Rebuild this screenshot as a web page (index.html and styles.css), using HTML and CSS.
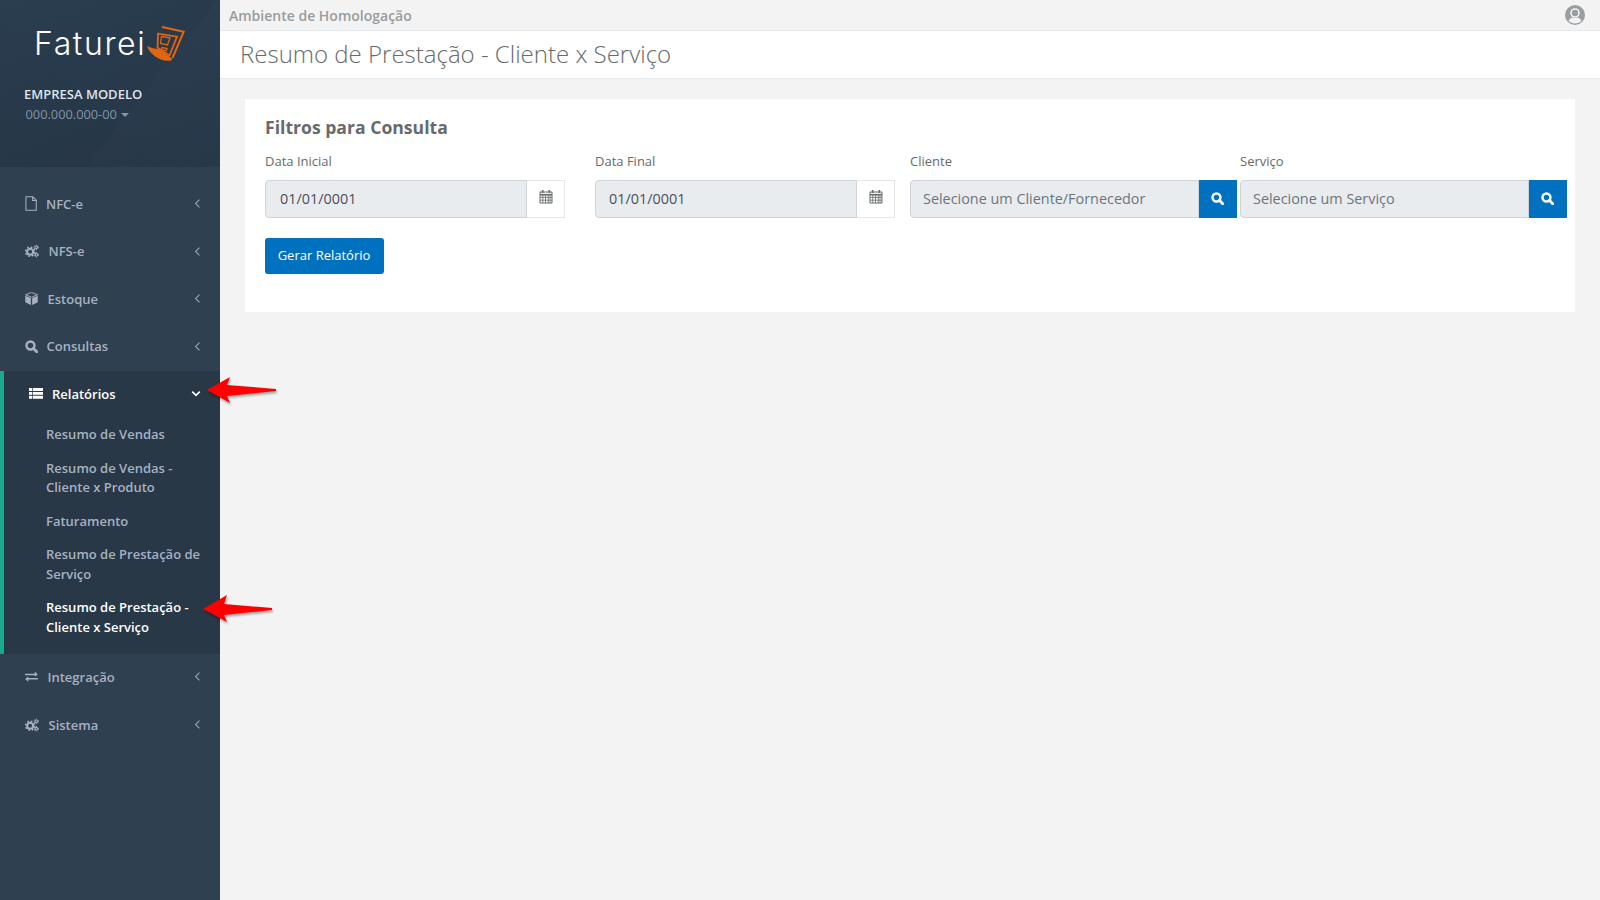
FILE: index.html
```html
<!DOCTYPE html>
<html lang="pt-BR">
<head>
<meta charset="utf-8">
<title>Resumo de Prestação - Cliente x Serviço</title>
<link rel="stylesheet" href="styles.css">
</head>
<body>
<svg class="defs" xmlns="http://www.w3.org/2000/svg">
  <symbol id="i-chev-left" viewBox="0 0 8 12"><path d="M6.3 1.5 1.8 6l4.500 4.500" fill="none" stroke="currentColor" stroke-width="1.4"/></symbol>
  <symbol id="i-chev-down" viewBox="0 0 12 8"><path d="M1.5 1.7 6 6.200l4.500-4.500" fill="none" stroke="currentColor" stroke-width="2"/></symbol>
  <symbol id="i-search" viewBox="0 0 14 14"><circle cx="5.9" cy="5.900" r="4.300" fill="none" stroke="currentColor" stroke-width="2.600"/><path d="M9 9 12.600 12.600" stroke="currentColor" stroke-width="3" stroke-linecap="round"/></symbol>
  <symbol id="i-cogs" viewBox="0 0 15 14"><circle cx="5.500" cy="7.800" r="3.200" fill="none" stroke="currentColor" stroke-width="2.200"/><circle cx="5.500" cy="7.800" r="4.900" fill="none" stroke="currentColor" stroke-width="1.600" stroke-dasharray="1.900 1.950"/><circle cx="12" cy="3" r="1.400" fill="none" stroke="currentColor" stroke-width="1.200"/><circle cx="12" cy="3" r="2.400" fill="none" stroke="currentColor" stroke-width="1" stroke-dasharray="1.200 1.300"/><circle cx="12" cy="11" r="1.400" fill="none" stroke="currentColor" stroke-width="1.200"/><circle cx="12" cy="11" r="2.400" fill="none" stroke="currentColor" stroke-width="1" stroke-dasharray="1.200 1.300"/></symbol>
  <symbol id="i-cal" viewBox="0 0 14 14"><path d="M1 2.500h12v11H1z" fill="none" stroke="currentColor"/><path d="M1 5.200h12" stroke="currentColor" stroke-width="1.600"/><path d="M3.700.6v3M10.300.6v3" stroke="currentColor" stroke-width="1.600"/><path d="M1 7.900h12M1 10.700h12M3.800 5.500v8M6.500 5.500v8M9.200 5.500v8M11 5.500v8" stroke="currentColor" stroke-width=".8"/></symbol>
</svg>

<aside class="sidebar">
  <header class="profile">
    <div class="logo">
      <span class="logo-text">Faturei</span>
      <svg class="logo-mark" viewBox="0 0 38 36" xmlns="http://www.w3.org/2000/svg">
        <path d="M15 .9 36.700 5.700 25.500 32" fill="none" stroke="#e2650f" stroke-width="2"/>
        <path d="M11 7.700 30 10.700 22.500 29.500 10.500 21.500z" fill="none" stroke="#e2650f" stroke-width="1.800"/>
        <path d="M14.500 10.500 23 11.800 20.500 19 13.500 17.500zM15 21.500l5 1-.6 2.300-4.600-1z" fill="none" stroke="#e2650f" stroke-width="1.300"/>
        <path d="M0 20c4 2 8 3 12 3 4.500 2.500 8.500 6 13 9.500 .5 1.800-1.500 2.500-4 2.300C11 34.500 3 28 0 20z" fill="#e2650f"/>
      </svg>
    </div>
    <div class="company">EMPRESA MODELO</div>
    <div class="doc">000.000.000-00 <span class="caret"></span></div>
  </header>

  <nav class="menu">
    <a class="item">
      <svg class="ico ico-file" viewBox="0 0 13 16" xmlns="http://www.w3.org/2000/svg"><path d="M1 .8h7.500L12.200 4.500v10.700H1zM8.200 1v3.800h4" fill="none" stroke="currentColor" stroke-width="1.100"/></svg>
      <span class="label l-nfce">NFC-e</span>
      <svg class="chev"><use href="#i-chev-left"/></svg>
    </a>
    <a class="item">
      <svg class="ico ico-cogs"><use href="#i-cogs"/></svg>
      <span class="label l-cogs">NFS-e</span>
      <svg class="chev"><use href="#i-chev-left"/></svg>
    </a>
    <a class="item">
      <svg class="ico ico-cube" viewBox="0 0 14 14" xmlns="http://www.w3.org/2000/svg"><path d="M7 .5 13.500 3 7 5.600.5 3z" fill="none" stroke="currentColor"/><path d="M.3 4 6.300 6.500V14L.3 11z" fill="currentColor"/><path d="M13.700 4 7.700 6.500V14l6-3z" fill="currentColor"/></svg>
      <span class="label l-cube">Estoque</span>
      <svg class="chev"><use href="#i-chev-left"/></svg>
    </a>
    <a class="item">
      <svg class="ico ico-search"><use href="#i-search"/></svg>
      <span class="label l-search">Consultas</span>
      <svg class="chev"><use href="#i-chev-left"/></svg>
    </a>

    <div class="group">
      <a class="item item-open">
        <svg class="ico ico-list" viewBox="0 0 14 11" xmlns="http://www.w3.org/2000/svg"><path d="M0 0h14v2.900H0zM0 3.900h14v2.900H0zM0 7.800h14v3H0z" fill="currentColor"/><path d="M3.500 0v11" stroke="#293846" stroke-width=".7"/></svg>
        <span class="label l-list">Relatórios</span>
        <svg class="chev-down"><use href="#i-chev-down"/></svg>
      </a>
      <ul class="submenu">
        <li>Resumo de Vendas</li>
        <li>Resumo de Vendas - Cliente x Produto</li>
        <li>Faturamento</li>
        <li>Resumo de Prestação de Serviço</li>
        <li class="current">Resumo de Prestação - Cliente x Serviço</li>
      </ul>
    </div>

    <a class="item item-after">
      <svg class="ico ico-swap" viewBox="0 0 14 12" xmlns="http://www.w3.org/2000/svg"><path d="M0 3h10.500V.5L14 3.800 10.500 6V4.500H0zM14 7.500H3.500V6L0 8.800l3.500 3V9.300H14z" fill="currentColor"/></svg>
      <span class="label l-swap">Integração</span>
      <svg class="chev"><use href="#i-chev-left"/></svg>
    </a>
    <a class="item">
      <svg class="ico ico-cogs"><use href="#i-cogs"/></svg>
      <span class="label l-cogs">Sistema</span>
      <svg class="chev"><use href="#i-chev-left"/></svg>
    </a>
  </nav>
</aside>

<main class="main">
  <div class="topbar">
    <span class="env">Ambiente de Homologação</span>
    <svg class="user" viewBox="0 0 20 20" xmlns="http://www.w3.org/2000/svg"><circle cx="10" cy="10" r="10" fill="#9a9ea3"/><circle cx="10" cy="8" r="4" fill="none" stroke="#f3f3f4" stroke-width="1.600"/><path d="M3.500 16c1.200-2.800 3.200-3.600 4-3.600 1.500.8 3.500.8 5 0 .8 0 2.800.8 4 3.600-3.500 3.300-9.500 3.300-13 0z" fill="#f3f3f4"/></svg>
  </div>
  <div class="titlebar"><h1>Resumo de Prestação - Cliente x Serviço</h1></div>

  <section class="card">
    <h2>Filtros para Consulta</h2>
    <div class="fields">
      <div class="field f-date">
        <label>Data Inicial</label>
        <div class="group-input">
          <div class="input input-date">01/01/0001</div>
          <span class="addon"><svg class="cal"><use href="#i-cal"/></svg></span>
        </div>
      </div>
      <div class="field f-date f-second">
        <label>Data Final</label>
        <div class="group-input">
          <div class="input input-date2">01/01/0001</div>
          <span class="addon"><svg class="cal"><use href="#i-cal"/></svg></span>
        </div>
      </div>
      <div class="field f-pick f-third">
        <label>Cliente</label>
        <div class="group-input">
          <div class="input input-pick">Selecione um Cliente/Fornecedor</div>
          <span class="btn-search"><svg class="mag"><use href="#i-search"/></svg></span>
        </div>
      </div>
      <div class="field f-pick f-fourth">
        <label>Serviço</label>
        <div class="group-input">
          <div class="input input-pick">Selecione um Serviço</div>
          <span class="btn-search"><svg class="mag"><use href="#i-search"/></svg></span>
        </div>
      </div>
    </div>
    <button class="btn-primary" type="button">Gerar Relatório</button>
  </section>
</main>

<svg class="arrows" viewBox="0 0 1600 900" xmlns="http://www.w3.org/2000/svg">
  <path d="M207 390 230 377 227 385 276 389 276 391 227 396 230 403z" fill="#f00"/>
  <path d="M203 609 227 595 224 604 272 608 272 610 224 615 227 622z" fill="#f00"/>
</svg>
</body>
</html>
```

FILE: styles.css
```css
* { box-sizing: border-box; }

html, body {
  margin: 0;
  height: 100%;
}

body {
  display: flex;
  height: 900px;
  overflow: hidden;
  background: #f3f3f4;
  color: #676a6c;
  font-family: "Open Sans", "Liberation Sans", sans-serif;
  font-size: 13px;
  position: relative;
}

.defs { display: none; }

/* Sidebar */
.sidebar {
  width: 220px;
  flex: none;
  background: #2f4050;
  height: 900px;
}

.profile {
  height: 167px;
  padding: 25px 0 0 24px;
  background:
    linear-gradient(128deg, transparent 0 62%, rgba(255,255,255,.01) 62% 100%),
    linear-gradient(42deg, rgba(0,0,0,.012) 0 40%, transparent 40% 100%),
    linear-gradient(160deg, #2a3e50 0%, #27394a 55%, #253647 100%);
}

.logo {
  display: flex;
  align-items: flex-end;
  height: 38px;
  margin-left: 10px;
}

.logo-text {
  color: #fff;
  font-family: "Inter", "Liberation Sans", sans-serif;
  font-weight: 300;
  font-size: 32px;
  line-height: 38px;
  letter-spacing: 1.6px;
}

.logo-mark {
  width: 38px;
  height: 36px;
  margin: 0 0 1px 1px;
}

.company {
  margin-top: 22px;
  color: #dfe4ed;
  font-weight: 600;
  font-size: 13px;
  line-height: 18px;
}

.doc {
  margin: 2px 0 0 1.500px;
  color: #8095a8;
  font-size: 12.800px;
  line-height: 18px;
}

.caret {
  display: inline-block;
  margin-left: 1px;
  vertical-align: 2px;
  border-top: 4px solid #8095a8;
  border-left: 4px solid transparent;
  border-right: 4px solid transparent;
}

.menu { padding-top: 14px; }

.item {
  display: flex;
  align-items: center;
  height: 47.400px;
  padding: 0 0 1.500px 25px;
  color: #a7b1c2;
  font-weight: 600;
}

.item-after { height: 48px; }

.label { flex: 1; }

.l-nfce { margin-left: 9px; }
.l-cogs { margin-left: 9.500px; }
.l-cube { margin-left: 9.500px; }
.l-search { margin-left: 8.500px; }
.l-swap { margin-left: 9.500px; }
.l-list { margin-left: 9px; color: #fff; }

.ico { flex: none; }
.ico-file { width: 12px; height: 15px; }
.ico-cogs { width: 14px; height: 14px; }
.ico-cube { width: 13px; height: 13px; }
.ico-search { width: 13px; height: 13px; }
.ico-swap { width: 13px; height: 11px; }
.ico-list { width: 14px; height: 11px; color: #fff; }

.chev {
  width: 7px;
  height: 11px;
  margin-right: 19px;
  color: #8fa0b8;
  flex: none;
}

.chev-down {
  width: 10px;
  height: 7px;
  margin-right: 19px;
  color: #fff;
  flex: none;
}

.group {
  background: #293846;
  border-left: 4px solid #19aa8d;
  height: 283px;
}

.item-open { height: 46px; padding-bottom: 0; }

.submenu {
  list-style: none;
  margin: 0;
  padding: 1px 14px 0 42px;
  color: #a7b1c2;
  font-weight: 600;
  line-height: 19.500px;
}

.submenu li { padding: 7.500px 0 6.500px; }
.submenu .current { color: #fff; }

/* Main */
.main {
  flex: 1;
  min-width: 0;
}

.topbar {
  display: flex;
  align-items: center;
  justify-content: space-between;
  height: 31px;
  padding: 0 15px 0 9px;
  border-bottom: 1px solid #e7eaec;
}

.env {
  color: #999c9e;
  font-weight: 600;
  font-size: 14px;
}

.user { width: 20px; height: 20px; }

.titlebar {
  height: 48px;
  padding-left: 20px;
  background: #fff;
  border-bottom: 1px solid #e7eaec;
}

.titlebar h1 {
  margin: 0;
  color: #676a6c;
  font-weight: 300;
  font-size: 24px;
  line-height: 46px;
}

.card {
  margin: 20px 25px 0;
  height: 213px;
  width: 1330px;
  padding: 18px 20px 0;
  background: #fff;
}

.card h2 {
  margin: 0;
  color: #676a6c;
  font-weight: 700;
  font-size: 17.600px;
  line-height: 20px;
}

.fields {
  display: flex;
  margin-top: 15px;
}

.field { flex: none; }
.f-date { width: 300px; }
.f-pick { width: 327px; }
.f-second { margin-left: 30px; }
.f-third { margin-left: 15px; }
.f-fourth { margin-left: 3px; }

.field label {
  display: block;
  height: 18px;
  margin-bottom: 10px;
  line-height: 18px;
}

.group-input {
  display: flex;
  height: 38px;
}

.input {
  flex: 1;
  background: #e9ecef;
  border: 1px solid #ced4da;
  border-radius: 4px 0 0 4px;
  line-height: 36px;
  font-size: 14.400px;
}

.input-date { padding-left: 14px; color: #495057; }
.input-date2 { padding-left: 13px; color: #495057; }
.input-pick { padding-left: 12px; color: #6c757d; }

.addon {
  display: flex;
  align-items: center;
  justify-content: center;
  width: 38px;
  flex: none;
  background: #fff;
  border: 1px solid #e5e6e7;
  border-left: 0;
}

.cal { width: 14px; height: 15px; color: #676a6c; margin-bottom: 5px; }

.btn-search {
  display: flex;
  align-items: center;
  justify-content: center;
  width: 38px;
  flex: none;
  background: #0071bf;
}

.mag { width: 13px; height: 13px; color: #fff; margin: 0 1px 2px 0; }

.btn-primary {
  display: block;
  width: 119px;
  height: 36px;
  margin-top: 20px;
  padding: 0 1px 2px 0;
  border: 0;
  border-radius: 3px;
  background: #0071bf;
  color: #fff;
  font-family: inherit;
  font-weight: 500;
  font-size: 13px;
}

/* Annotation arrows over the screenshot */
.arrows {
  position: absolute;
  top: 0;
  left: 0;
  width: 1600px;
  height: 900px;
  pointer-events: none;
  filter: drop-shadow(1px 2px 1px rgba(0,0,0,.35));
}
```
